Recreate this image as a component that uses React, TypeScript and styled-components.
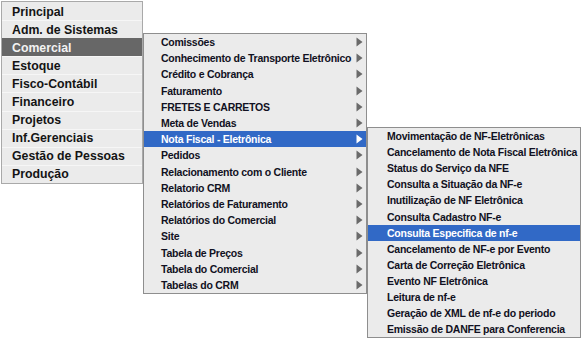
import React from "react"
import styled, { createGlobalStyle } from "styled-components"

const GlobalStyle = createGlobalStyle`
  html, body {
    margin: 0;
    padding: 0;
    background: #ffffff;
  }
  body {
    font-family: "Liberation Sans", Arial, sans-serif;
  }
`

const Desk = styled.div`
  display: flex;
  align-items: flex-start;
  padding: 1px 0 0 1px;
`

const Menu = styled.ul<{ $width: number; $top: number; $row: number; $popup?: boolean }>`
  list-style: none;
  margin: ${(p) => p.$top}px 0 0 0;
  padding: 0;
  width: ${(p) => p.$width}px;
  box-sizing: border-box;
  display: grid;
  grid-auto-rows: ${(p) => p.$row}px;
  background: #ebebeb;
  border: 1px solid ${(p) => (p.$popup ? "#8e8e8e" : "#a9a9a9")};
  flex-shrink: 0;
`

const MainItem = styled.li<{ $active?: boolean }>`
  display: flex;
  align-items: center;
  padding-left: 10px;
  font-size: 12.3px;
  font-weight: bold;
  color: ${(p) => (p.$active ? "#f2f2f2" : "#141414")};
  background: ${(p) => (p.$active ? "#676767" : "transparent")};
  border-top: 1px solid ${(p) => (p.$active ? "#676767" : "#f6f6f6")};
  box-sizing: border-box;
  white-space: nowrap;
  &:first-child {
    border-top-color: transparent;
  }
`

const SubItem = styled.li<{ $active?: boolean; $indent: number }>`
  display: flex;
  align-items: center;
  justify-content: space-between;
  padding: 0 3px 0 ${(p) => p.$indent}px;
  font-size: 10.5px;
  letter-spacing: -0.25px;
  font-weight: bold;
  color: ${(p) => (p.$active ? "#ffffff" : "#111122")};
  background: ${(p) => (p.$active ? "#3169c6" : "transparent")};
  white-space: nowrap;
`

const Arrow = ({ light }: { light?: boolean }) => (
  <svg width="7" height="10" viewBox="0 0 7 10">
    <path d="M0.5 0.5 L6.5 5 L0.5 9.5 Z" fill={light ? "#ffffff" : "#6a6a6a"} />
  </svg>
)

const mainItems = [
  "Principal",
  "Adm. de Sistemas",
  "Comercial",
  "Estoque",
  "Fisco-Contábil",
  "Financeiro",
  "Projetos",
  "Inf.Gerenciais",
  "Gestão de Pessoas",
  "Produção",
]

const comercialItems = [
  "Comissões",
  "Conhecimento de Transporte Eletrônico",
  "Crédito e Cobrança",
  "Faturamento",
  "FRETES E CARRETOS",
  "Meta de Vendas",
  "Nota Fiscal - Eletrônica",
  "Pedidos",
  "Relacionamento com o Cliente",
  "Relatorio CRM",
  "Relatórios de Faturamento",
  "Relatórios do Comercial",
  "Site",
  "Tabela de Preços",
  "Tabela do Comercial",
  "Tabelas do CRM",
]

const nfeItems = [
  "Movimentação de NF-Eletrônicas",
  "Cancelamento de Nota Fiscal Eletrônica",
  "Status do Serviço da NFE",
  "Consulta a Situação da NF-e",
  "Inutilização de NF Eletrônica",
  "Consulta Cadastro NF-e",
  "Consulta Especifica de nf-e",
  "Cancelamento de NF-e por Evento",
  "Carta de Correção Eletrônica",
  "Evento NF Eletrônica",
  "Leitura de nf-e",
  "Geração de XML de nf-e do periodo",
  "Emissão de DANFE para Conferencia",
]

export default function App() {
  return (
    <>
      <GlobalStyle />
      <Desk>
        <Menu $width={142} $top={0} $row={18.1}>
          {mainItems.map((name) => (
            <MainItem key={name} $active={name === "Comercial"}>
              {name}
            </MainItem>
          ))}
        </Menu>
        <Menu $width={224} $top={32} $row={16.19} $popup>
          {comercialItems.map((name) => {
            const active = name === "Nota Fiscal - Eletrônica"
            return (
              <SubItem key={name} $active={active} $indent={17}>
                <span>{name}</span>
                <Arrow light={active} />
              </SubItem>
            )
          })}
        </Menu>
        <Menu $width={214} $top={126} $row={16.1} $popup>
          {nfeItems.map((name) => (
            <SubItem key={name} $active={name === "Consulta Especifica de nf-e"} $indent={19}>
              <span>{name}</span>
            </SubItem>
          ))}
        </Menu>
      </Desk>
    </>
  )
}
